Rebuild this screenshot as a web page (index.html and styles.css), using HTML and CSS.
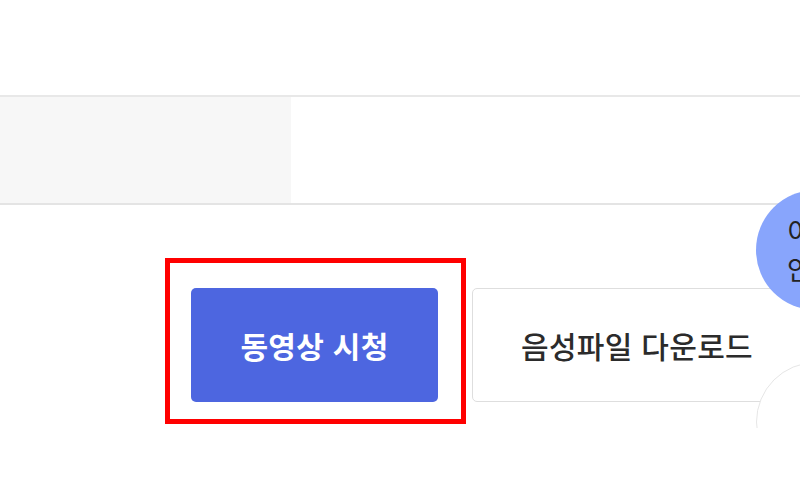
FILE: index.html
```html
<!DOCTYPE html>
<html lang="ko">
<head>
  <meta charset="UTF-8">
  <meta name="viewport" content="width=device-width, initial-scale=1.0">
  <title>강의 보기</title>
  <link rel="stylesheet" href="styles.css">
</head>
<body>
  <div class="page">
    <div class="info-row">
      <div class="info-label"></div>
      <div class="info-value"></div>
    </div>

    <div class="actions">
      <button class="btn btn-video">동영상 시청</button>
      <button class="btn btn-audio">음성파일 다운로드</button>
      <div class="highlight"></div>
    </div>

    <div class="quick-menu">
      <div class="quick-item quick-guide">이용<br>안내</div>
      <div class="quick-item quick-top"></div>
    </div>
  </div>
</body>
</html>
```
FILE: styles.css
```css
* {
  box-sizing: border-box;
}

body {
  margin: 0;
  font-family: "Noto Sans CJK KR", "Noto Sans", sans-serif;
  background: #fff;
  color: #333;
  overflow: hidden;
}

.page {
  position: relative;
  height: 500px;
  padding-top: 95px;
}

.info-row {
  display: flex;
  height: 110px;
  border-top: 2px solid #e8e8e8;
  border-bottom: 2px solid #e4e4e4;
}

.info-label {
  width: 291px;
  background: #f7f7f7;
}

.info-value {
  flex: 1;
}

.actions {
  position: relative;
  display: flex;
  gap: 34px;
  margin-top: 83px;
  padding-left: 191px;
}

.btn {
  flex: none;
  height: 114px;
  border-radius: 5px;
  font-family: inherit;
  font-size: 30px;
  letter-spacing: 0.3px;
  cursor: pointer;
}

.btn-video {
  width: 247px;
  border: none;
  background: #4d66e0;
  color: #fff;
  font-weight: 700;
}

.btn-audio {
  width: 330px;
  border: 1px solid #dedede;
  background: #fff;
  color: #2b2b2b;
  font-weight: 500;
}

/* annotation box round the video button */
.highlight {
  position: absolute;
  left: 165px;
  top: -30px;
  width: 301px;
  height: 166px;
  border: 5px solid #ff0000;
  pointer-events: none;
}

.quick-menu {
  position: absolute;
  left: 756px;
  top: 190px;
  width: 120px;
  height: 238px;
  overflow: hidden;
}

.quick-item {
  width: 120px;
  height: 120px;
  border-radius: 50%;
}

.quick-guide {
  display: flex;
  align-items: center;
  padding-left: 31px;
  background: #88a5fc;
  color: #222;
  font-size: 27px;
  line-height: 38px;
}

.quick-top {
  margin-top: 52px;
  background: #fff;
  border: 1px solid #e6e6e6;
}
```
